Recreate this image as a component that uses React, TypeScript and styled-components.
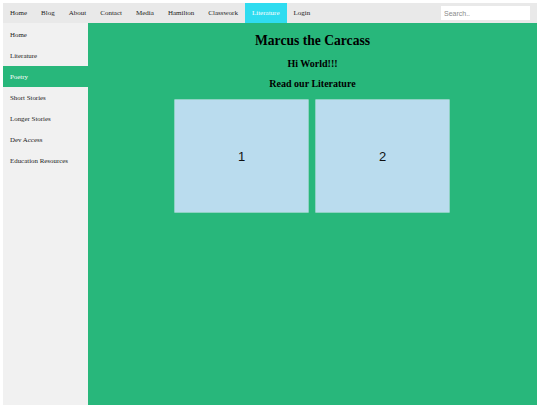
import React from 'react';
import styled, { createGlobalStyle } from 'styled-components';

const GlobalStyle = createGlobalStyle`
    html, body {
        margin: 0;
        padding: 0;
        height: 100%;
        background: #ffffff;
    }
    body {
        padding: 3px;
        box-sizing: border-box;
        font-family: "Liberation Serif", "Times New Roman", serif;
    }
    #root {
        height: 100%;
    }
`;

const Page = styled.div`
    display: flex;
    flex-direction: column;
    height: 402px;
`;

const TopNav = styled.nav`
    display: flex;
    align-items: center;
    height: 20px;
    background-color: #e9e9e9;
    flex-shrink: 0;
`;

const NavLink = styled.a<{ active?: boolean }>`
    display: flex;
    align-items: center;
    height: 100%;
    padding: 0 7px;
    font-size: 7px;
    color: ${p => (p.active ? '#ffffff' : '#222222')};
    background-color: ${p => (p.active ? '#2fdcf0' : 'transparent')};
    text-decoration: none;
`;

const SearchBox = styled.input`
    margin-left: auto;
    margin-right: 7px;
    width: 89px;
    height: 14px;
    box-sizing: border-box;
    border: none;
    padding: 0 3px;
    font-family: "Liberation Sans", Arial, sans-serif;
    font-size: 7px;
    outline: none;
    &::placeholder {
        color: #8a8a8a;
    }
`;

const Body = styled.div`
    display: flex;
    flex: 1;
`;

const SideNav = styled.aside`
    display: flex;
    flex-direction: column;
    width: 85px;
    padding-top: 1px;
    background-color: #f1f1f1;
    flex-shrink: 0;
`;

const SideLink = styled.a<{ active?: boolean }>`
    display: flex;
    align-items: center;
    height: 21px;
    padding-left: 7px;
    font-size: 6.9px;
    color: ${p => (p.active ? '#ffffff' : '#222222')};
    background-color: ${p => (p.active ? '#28b77b' : 'transparent')};
    text-decoration: none;
`;

const Main = styled.main`
    flex: 1;
    display: flex;
    flex-direction: column;
    align-items: center;
    background-color: #28b77b;
    padding-top: 9px;
`;

const Title = styled.h1`
    margin: 0;
    font-size: 13.6px;
    line-height: 18px;
    color: #000000;
`;

const SubTitle = styled.h2<{ first?: boolean }>`
    margin: 0;
    margin-top: ${p => (p.first ? '4px' : '0')};
    font-size: 10px;
    line-height: 20px;
    color: #000000;
`;

const CardRow = styled.div`
    display: flex;
    gap: 6px;
    margin-top: 5px;
    margin-right: 1px;
`;

const Card = styled.div`
    display: flex;
    align-items: center;
    justify-content: center;
    width: 135px;
    height: 114px;
    box-sizing: border-box;
    background-color: #badcee;
    border: 1px solid #8fd2c4;
    border-radius: 1px;
    font-family: "Liberation Sans", Arial, sans-serif;
    font-size: 13px;
    color: #111111;
`;

const topLinks = ['Home', 'Blog', 'About', 'Contact', 'Media', 'Hamilton', 'Classwork', 'Literature', 'Login'];
const sideLinks = ['Home', 'Literature', 'Poetry', 'Short Stories', 'Longer Stories', 'Dev Access', 'Education Resources'];

export default function App() {
    return (
        <Page>
            <GlobalStyle />
            <TopNav>
                {topLinks.map(l => (
                    <NavLink key={l} active={l === 'Literature'}>{l}</NavLink>
                ))}
                <SearchBox placeholder="Search.." />
            </TopNav>
            <Body>
                <SideNav>
                    {sideLinks.map(l => (
                        <SideLink key={l} active={l === 'Poetry'}>{l}</SideLink>
                    ))}
                </SideNav>
                <Main>
                    <Title>Marcus the Carcass</Title>
                    <SubTitle first>Hi World!!!</SubTitle>
                    <SubTitle>Read our Literature</SubTitle>
                    <CardRow>
                        <Card>1</Card>
                        <Card>2</Card>
                    </CardRow>
                </Main>
            </Body>
        </Page>
    );
}
